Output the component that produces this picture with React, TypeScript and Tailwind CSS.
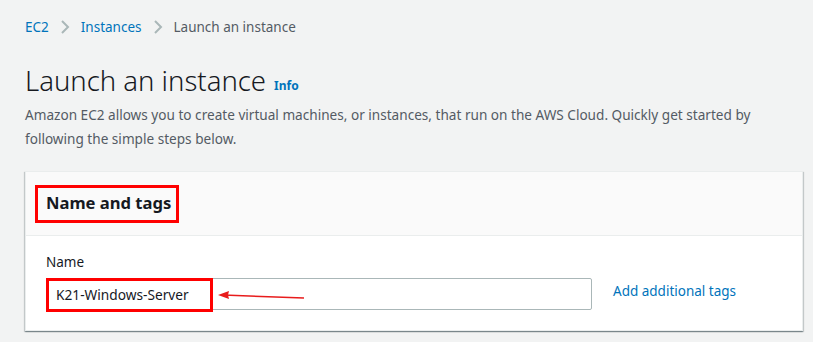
import React from "react";

export default function App() {
  return (
    <div className="w-[813px] h-[342px] overflow-hidden bg-[#f2f3f3] text-[#16191f]" style={{ fontFamily: '"Noto Sans", "Open Sans", Arial, sans-serif' }}>
      <div className="pl-[25px] pr-[10px]">
        <nav className="flex items-center h-[20px] mt-[17px] text-[13.5px]">
          <span className="text-[#0073bb]">EC2</span>
          <svg width="10" height="14" viewBox="0 0 10 14" className="mx-[11px]">
            <path d="M2 1 L8 7 L2 13" fill="none" stroke="#aab7b8" strokeWidth="2" />
          </svg>
          <span className="text-[#0073bb]">Instances</span>
          <svg width="10" height="14" viewBox="0 0 10 14" className="mx-[11px]">
            <path d="M2 1 L8 7 L2 13" fill="none" stroke="#aab7b8" strokeWidth="2" />
          </svg>
          <span className="text-[#545b64]">Launch an instance</span>
        </nav>
        <div className="flex items-end mt-[26px] h-[36px]">
          <h1 className="text-[27.5px] font-light leading-[36px] text-[#16191f]">Launch an instance</h1>
          <span className="ml-[8px] mb-[4px] text-[12px] font-bold text-[#0073bb]">Info</span>
        </div>
        <p className="mt-[4px] text-[13.6px] leading-[24px] text-[#545b64] w-[760px]">
          Amazon EC2 allows you to create virtual machines, or instances, that run on the AWS Cloud. Quickly get started by following the simple steps below.
        </p>
        <div className="mt-[20px] w-[778px] bg-white border border-[#eaeded] shadow-[0_1px_1px_0_rgba(0,28,36,0.3),1px_1px_1px_0_rgba(0,28,36,0.15),-1px_1px_1px_0_rgba(0,28,36,0.15)]">
          <div className="h-[64px] bg-[#fafafa] border-b border-[#eaeded] flex items-center pl-[9px]">
            <div className="border-[3px] border-[#ff0000] h-[38px] w-[144px] flex items-center pl-[8px]">
              <h2 className="text-[16.6px] font-bold leading-none text-[#16191f] whitespace-nowrap">Name and tags</h2>
            </div>
          </div>
          <div className="pl-[20px] pt-[16px] pb-[20px]">
            <div className="text-[13.5px] text-[#16191f] leading-[20px]">Name</div>
            <div className="flex items-center mt-[6px]">
              <div className="relative w-[546px] h-[32px] border border-[#aab7b8] rounded-[2px] bg-white">
                <div className="absolute left-[-1px] top-[-1px] w-[167px] h-[34px] border-[3px] border-[#ff0000] flex items-center pl-[7px] text-[13.7px] text-[#16191f] whitespace-nowrap">
                  K21-Windows-Server
                </div>
                <svg className="absolute left-[170px] top-[6px]" width="90" height="20" viewBox="0 0 90 20">
                  <path d="M6 10 L87 13" stroke="#e81c1c" strokeWidth="1.5" fill="none" />
                  <path d="M1 10 L12 6 L11 10 L12 14 Z" fill="#e81c1c" />
                </svg>
              </div>
              <span className="ml-[21px] mb-[6px] text-[13.5px] text-[#0073bb]">Add additional tags</span>
            </div>
          </div>
        </div>
      </div>
    </div>
  );
}
